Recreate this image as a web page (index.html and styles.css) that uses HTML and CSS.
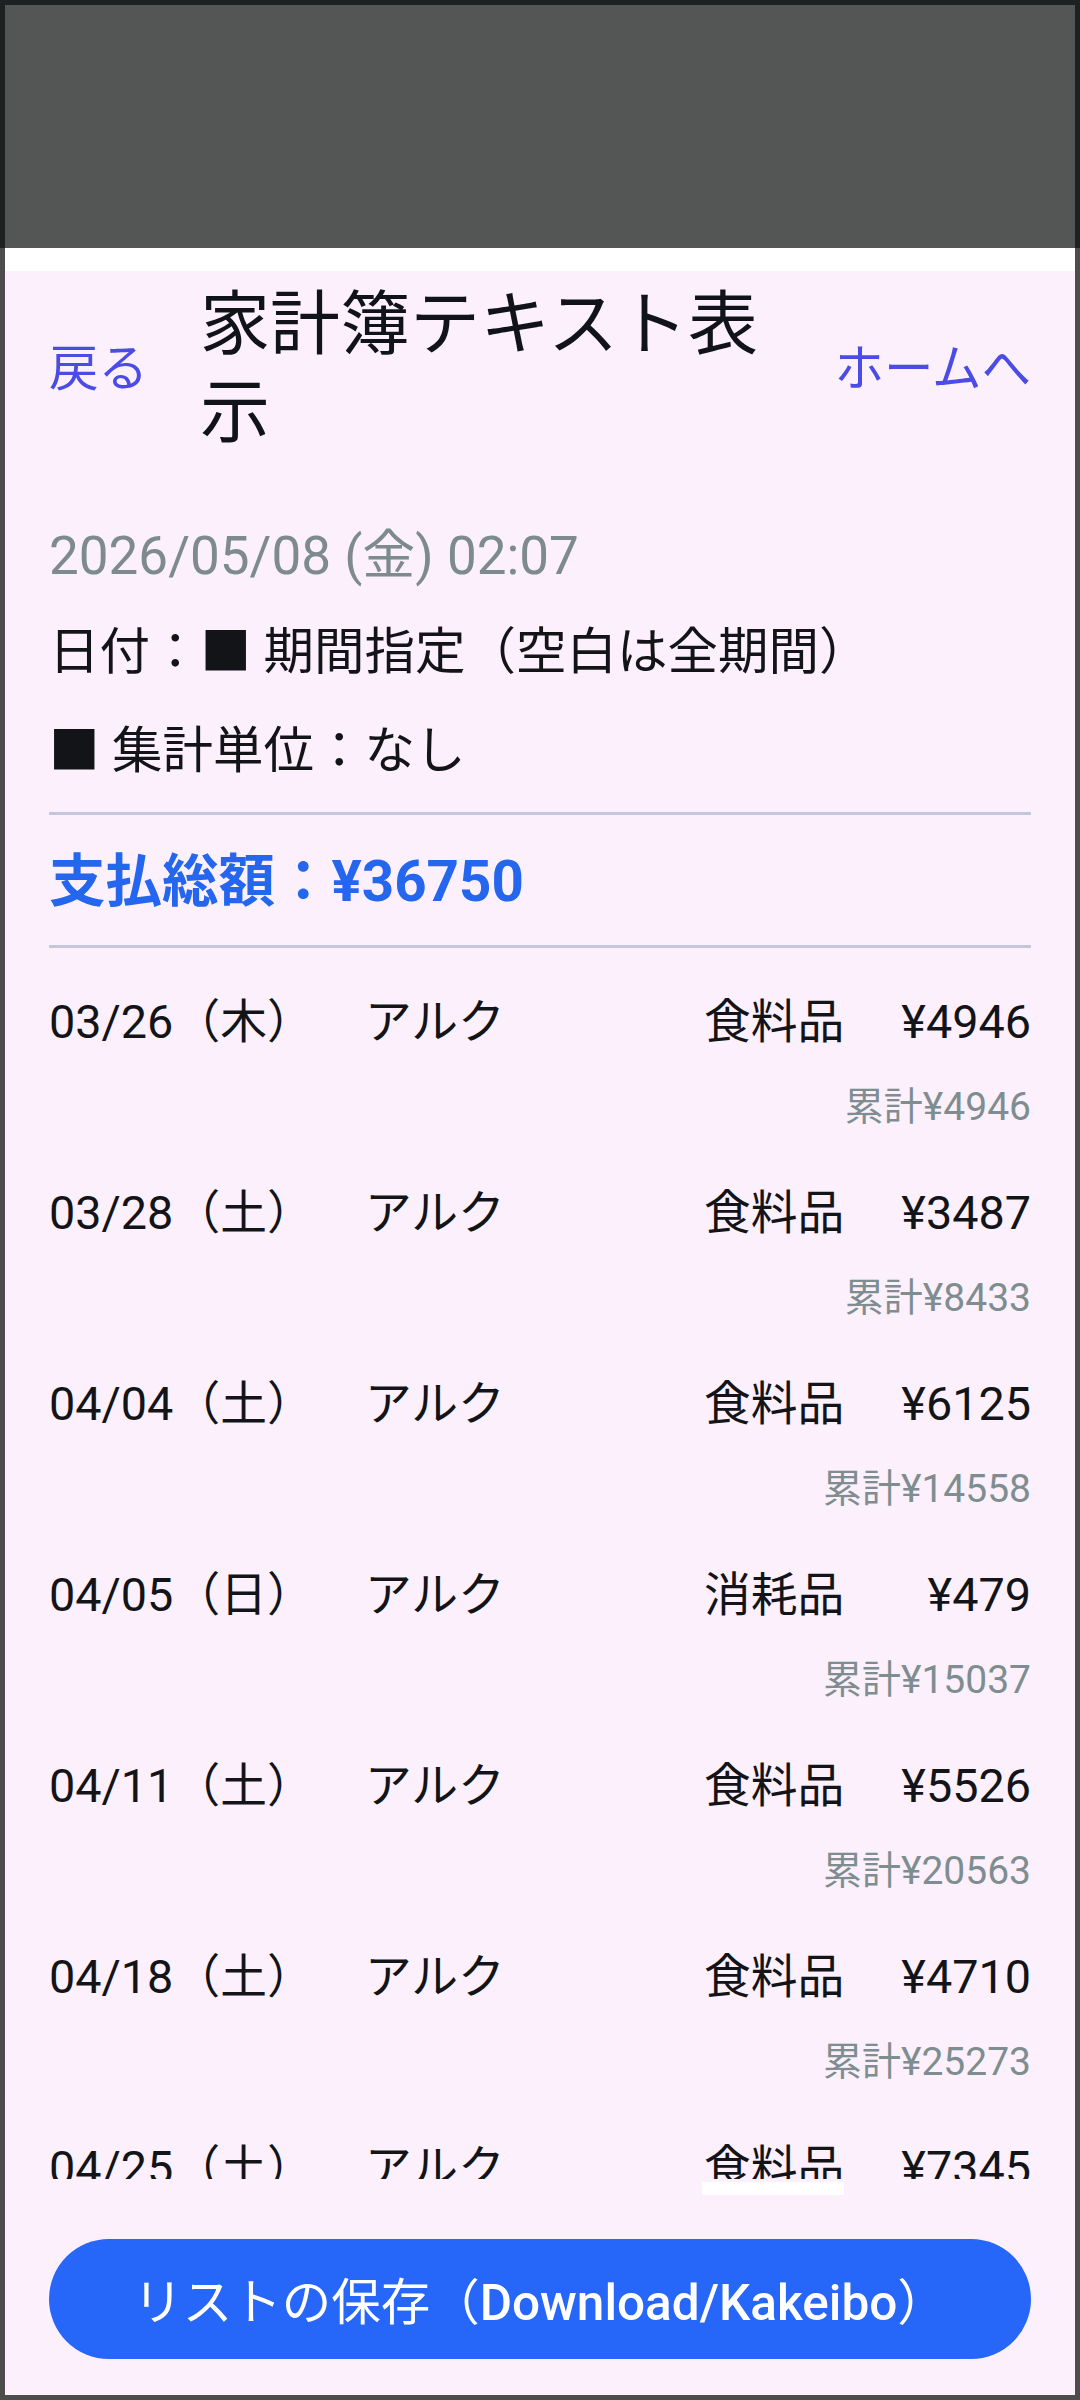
FILE: index.html
```html
<!DOCTYPE html>
<html lang="ja">
<head>
<meta charset="utf-8">
<title>家計簿テキスト表示</title>
<link rel="stylesheet" href="styles.css">
</head>
<body>
<div class="screen">
  <div class="statusbar"></div>
  <div class="app">
    <div class="white-gap"></div>
    <main class="page">
      <header class="header">
        <a class="link back">戻る</a>
        <h1 class="title">家計簿テキスト表示</h1>
        <a class="link home">ホームへ</a>
      </header>
      <div class="now">2026/05/08 (金) 02:07</div>
      <div class="info">日付：■ 期間指定（空白は全期間）</div>
      <div class="info">■ 集計単位：なし</div>
      <div class="rule"></div>
      <div class="total">支払総額：¥36750</div>
      <div class="rule"></div>
      <div class="list">
        <div class="row">
          <div class="main"><span>03/26（木）</span><span>アルク</span><span class="cat">食料品</span><span class="amt">¥4946</span></div>
          <div class="cum">累計¥4946</div>
        </div>
        <div class="row">
          <div class="main"><span>03/28（土）</span><span>アルク</span><span class="cat">食料品</span><span class="amt">¥3487</span></div>
          <div class="cum">累計¥8433</div>
        </div>
        <div class="row">
          <div class="main"><span>04/04（土）</span><span>アルク</span><span class="cat">食料品</span><span class="amt">¥6125</span></div>
          <div class="cum">累計¥14558</div>
        </div>
        <div class="row">
          <div class="main"><span>04/05（日）</span><span>アルク</span><span class="cat">消耗品</span><span class="amt">¥479</span></div>
          <div class="cum">累計¥15037</div>
        </div>
        <div class="row">
          <div class="main"><span>04/11（土）</span><span>アルク</span><span class="cat">食料品</span><span class="amt">¥5526</span></div>
          <div class="cum">累計¥20563</div>
        </div>
        <div class="row">
          <div class="main"><span>04/18（土）</span><span>アルク</span><span class="cat">食料品</span><span class="amt">¥4710</span></div>
          <div class="cum">累計¥25273</div>
        </div>
        <div class="row">
          <div class="main"><span>04/25（土）</span><span>アルク</span><span class="cat">食料品</span><span class="amt">¥7345</span></div>
          <div class="cum">累計¥32618</div>
        </div>
      </div>
      <div class="footer">
        <div class="glitch"></div>
        <button class="save">リストの保存（<span class="latin">Download/Kakeibo</span>）</button>
      </div>
    </main>
  </div>
</div>
</body>
</html>
```
FILE: styles.css
```css
* { box-sizing: border-box; }
html, body {
  margin: 0;
  padding: 0;
  width: 1080px;
  height: 2400px;
  overflow: hidden;
}
body {
  font-family: "Roboto", "Noto Sans CJK JP", sans-serif;
  color: #121418;
  background: #4d4d4d;
}
.screen {
  width: 1080px;
  height: 2400px;
  display: flex;
  flex-direction: column;
}
.statusbar {
  height: 248px;
  flex: none;
  background: #535655;
  border: 5px solid #1e2121;
  border-bottom: none;
}
.app {
  flex: 1;
  display: flex;
  flex-direction: column;
  border: 5px solid #4d4d4d;
  border-top: none;
}
.white-gap {
  height: 23px;
  flex: none;
  background: #ffffff;
}
.page {
  flex: 1;
  background: #fcf0fc;
  padding: 0 44px 0 44px;
  display: flex;
  flex-direction: column;
}
.header {
  display: flex;
  align-items: center;
  padding-top: 10px;
}
.link {
  font-size: 49.5px;
  line-height: 60px;
  color: #4b4ce6;
  white-space: nowrap;
  flex: none;
}
.title {
  flex: 1;
  margin: 0 40px 0 52px;
  font-size: 70px;
  line-height: 88px;
  font-weight: 400;
  color: #101318;
}
.now {
  margin-top: 64px;
  font-size: 53px;
  line-height: 70px;
  color: #7d8b90;
}
.info {
  font-size: 50.5px;
  line-height: 99px;
}
.now + .info { margin-top: 11px; }
.rule {
  height: 3px;
  background: #c4c6dc;
  flex: none;
}
.info + .rule { margin-top: 12px; }
.total {
  height: 130px;
  padding-top: 4px;
  font-size: 56.5px;
  line-height: 126px;
  font-weight: 700;
  color: #2466ee;
}
.list {
  height: 1231px;
  flex: none;
  overflow: hidden;
  padding-top: 17px;
}
.row {
  padding: 27px 0;
}
.main {
  display: grid;
  grid-template-columns: 316px 1fr 140px 187px;
  font-size: 46.75px;
  line-height: 60px;
  white-space: nowrap;
}
.amt { text-align: right; }
.cum {
  margin-top: 33px;
  text-align: right;
  font-size: 39px;
  line-height: 44px;
  color: #7e8e90;
}
.footer {
  display: flex;
  flex-direction: column;
}
.glitch {
  margin-top: 3px;
  margin-left: 653px;
  width: 142px;
  height: 13px;
  background: #ffffff;
}
.save {
  margin-top: 44px;
  height: 120px;
  border: none;
  border-radius: 60px;
  background: #2666f8;
  color: #ffffff;
  font-family: "Roboto", "Noto Sans CJK JP", sans-serif;
  font-size: 49.5px;
  font-weight: 400;
  line-height: 120px;
  padding: 4px 0 0 0;
  text-align: center;
}
.latin { font-weight: 500; }
```
